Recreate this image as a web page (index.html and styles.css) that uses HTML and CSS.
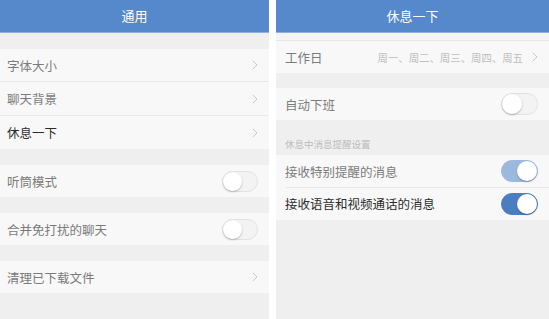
FILE: index.html
```html
<!DOCTYPE html>
<html lang="zh">
<head>
<meta charset="utf-8">
<title>设置</title>
<link rel="stylesheet" href="styles.css">
</head>
<body>
<div class="screens">
  <section class="screen screen-left">
    <header class="bar">通用</header>
    <div class="gap"></div>
    <div class="group">
      <div class="row"><span class="label">字体大小</span><svg class="chev" width="6" height="10" viewBox="0 0 6 10"><path d="M0.8 0.8 L5 5 L0.8 9.2" fill="none" stroke="#c9c9c9" stroke-width="1"/></svg></div>
      <div class="row"><span class="label">聊天背景</span><svg class="chev" width="6" height="10" viewBox="0 0 6 10"><path d="M0.8 0.8 L5 5 L0.8 9.2" fill="none" stroke="#c9c9c9" stroke-width="1"/></svg></div>
      <div class="row"><span class="label dark">休息一下</span><svg class="chev" width="6" height="10" viewBox="0 0 6 10"><path d="M0.8 0.8 L5 5 L0.8 9.2" fill="none" stroke="#c9c9c9" stroke-width="1"/></svg></div>
    </div>
    <div class="gap"></div>
    <div class="group">
      <div class="row"><span class="label">听筒模式</span><span class="switch"><span class="knob"></span></span></div>
    </div>
    <div class="gap"></div>
    <div class="group">
      <div class="row"><span class="label">合并免打扰的聊天</span><span class="switch"><span class="knob"></span></span></div>
    </div>
    <div class="gap"></div>
    <div class="group">
      <div class="row"><span class="label">清理已下载文件</span><svg class="chev" width="6" height="10" viewBox="0 0 6 10"><path d="M0.8 0.8 L5 5 L0.8 9.2" fill="none" stroke="#c9c9c9" stroke-width="1"/></svg></div>
    </div>
  </section>

  <section class="screen screen-right">
    <header class="bar">休息一下</header>
    <div class="strip"></div>
    <div class="group">
      <div class="row"><span class="label">工作日</span><span class="value">周一、周二、周三、周四、周五</span><svg class="chev" width="6" height="10" viewBox="0 0 6 10"><path d="M0.8 0.8 L5 5 L0.8 9.2" fill="none" stroke="#c9c9c9" stroke-width="1"/></svg></div>
    </div>
    <div class="gap gap-15"></div>
    <div class="group">
      <div class="row"><span class="label">自动下班</span><span class="switch"><span class="knob"></span></span></div>
    </div>
    <div class="section-title">休息中消息提醒设置</div>
    <div class="group">
      <div class="row"><span class="label">接收特别提醒的消息</span><span class="switch on light"><span class="knob"></span></span></div>
      <div class="row"><span class="label dark">接收语音和视频通话的消息</span><span class="switch on"><span class="knob"></span></span></div>
    </div>
  </section>
</div>
</body>
</html>
```

FILE: styles.css
```css
* { box-sizing: border-box; }

html, body {
  margin: 0;
  padding: 0;
  background: #ffffff;
}

body {
  font-family: "Noto Sans CJK SC", "Noto Sans", sans-serif;
  width: 549px;
  height: 319px;
  overflow: hidden;
}

.screens {
  display: flex;
  gap: 7px;
  height: 319px;
}

.screen {
  background: #efefef;
  height: 319px;
  display: flex;
  flex-direction: column;
}

.screen-left { width: 269px; }
.screen-right { flex: 1; }

.bar {
  height: 33px;
  background: #5589cb;
  border-bottom: 1px solid #8db0de;
  color: #ffffff;
  font-size: 13px;
  line-height: 31px;
  text-align: center;
  flex: none;
}

.gap { height: 16px; flex: none; }
.gap-15 { height: 15px; }

.strip {
  height: 8px;
  background: #f5f5f5;
  border-bottom: 1px solid #e7e7e7;
  flex: none;
}

.group {
  background: #f8f8f8;
  flex: none;
}

.row {
  height: 32px;
  display: flex;
  align-items: center;
  padding: 0 11px 0 7px;
  position: relative;
}

.screen-right .row { padding-left: 9px; }

.row + .row {
  height: 34px;
  border-top: 1px solid #e9e9e9;
}
.screen-right .row + .row { border-top: none; height: 33px; }
.screen-right .row + .row::before {
  content: "";
  position: absolute;
  top: 0;
  left: 10px;
  right: 0;
  height: 1px;
  background: #e6e6e6;
}

.label {
  flex: 1;
  font-size: 12.5px;
  color: #7b7b7b;
  white-space: nowrap;
}

.label.dark { color: #2b2b2b; }

.value {
  font-size: 10.4px;
  color: #bdbdbd;
  margin-right: 9px;
  white-space: nowrap;
}

.chev { flex: none; display: block; }

.switch {
  flex: none;
  width: 36px;
  height: 21px;
  border-radius: 11px;
  border: 1px solid #e1e1e1;
  background: #f3f3f3;
  position: relative;
}

.switch .knob {
  position: absolute;
  top: 0;
  left: 0;
  width: 19px;
  height: 19px;
  border-radius: 50%;
  background: #ffffff;
  box-shadow: 0 1px 2px rgba(0,0,0,0.25);
}

.screen-right .switch { width: 37px; height: 22px; }
.screen-right .switch .knob { width: 20px; height: 20px; }

.switch.on {
  background: #4a7ec0;
  border-color: #4a7ec0;
}

.switch.on.light {
  background: #9bb9de;
  border-color: #9bb9de;
}

.switch.on .knob { left: auto; right: 0; }

.section-title {
  height: 35px;
  padding: 17px 0 0 9px;
  font-size: 9.5px;
  line-height: 14px;
  color: #bcbcbc;
  flex: none;
}
```
